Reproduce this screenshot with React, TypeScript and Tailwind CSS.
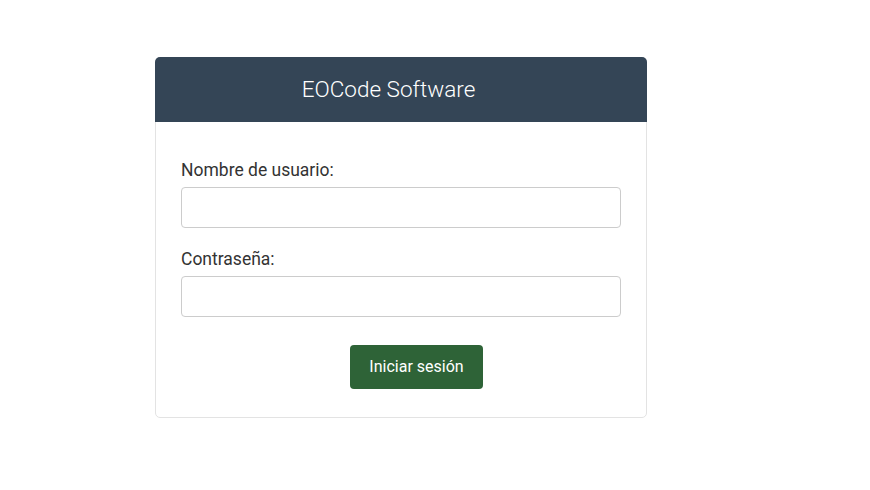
export default function App() {
  return (
    <div className="min-h-[490px] w-full bg-white pt-[57px] pl-[155px]" style={{ fontFamily: 'Roboto, "Liberation Sans", sans-serif' }}>
      <div className="w-[492px] rounded-[5px] border border-[#e3e3e3] bg-white">
        <div className="-mx-px -mt-px flex h-[65px] items-center justify-center rounded-t-[5px] bg-[#344556] pr-[25px]">
          <h1 className="text-[22.5px] font-light text-white">EOCode Software</h1>
        </div>
        <form className="flex flex-col px-[25px] pt-[36px] pb-[28px]">
          <label htmlFor="username" className="mb-[4px] text-[17.5px] leading-[25px] text-[#333]">
            Nombre de usuario:
          </label>
          <input
            id="username"
            type="text"
            className="h-[41px] w-full rounded-[4px] border border-[#cccccc] px-3 outline-none"
          />
          <label htmlFor="password" className="mt-[19px] mb-[4px] text-[17.5px] leading-[25px] text-[#333]">
            Contraseña:
          </label>
          <input
            id="password"
            type="password"
            className="h-[41px] w-full rounded-[4px] border border-[#cccccc] px-3 outline-none"
          />
          <div className="mt-[28px] flex justify-center pl-[31px]">
            <button type="submit" className="h-[44px] w-[133px] rounded-[4px] bg-[#2e6337] text-[16px] text-white">
              Iniciar sesión
            </button>
          </div>
        </form>
      </div>
    </div>
  );
}
